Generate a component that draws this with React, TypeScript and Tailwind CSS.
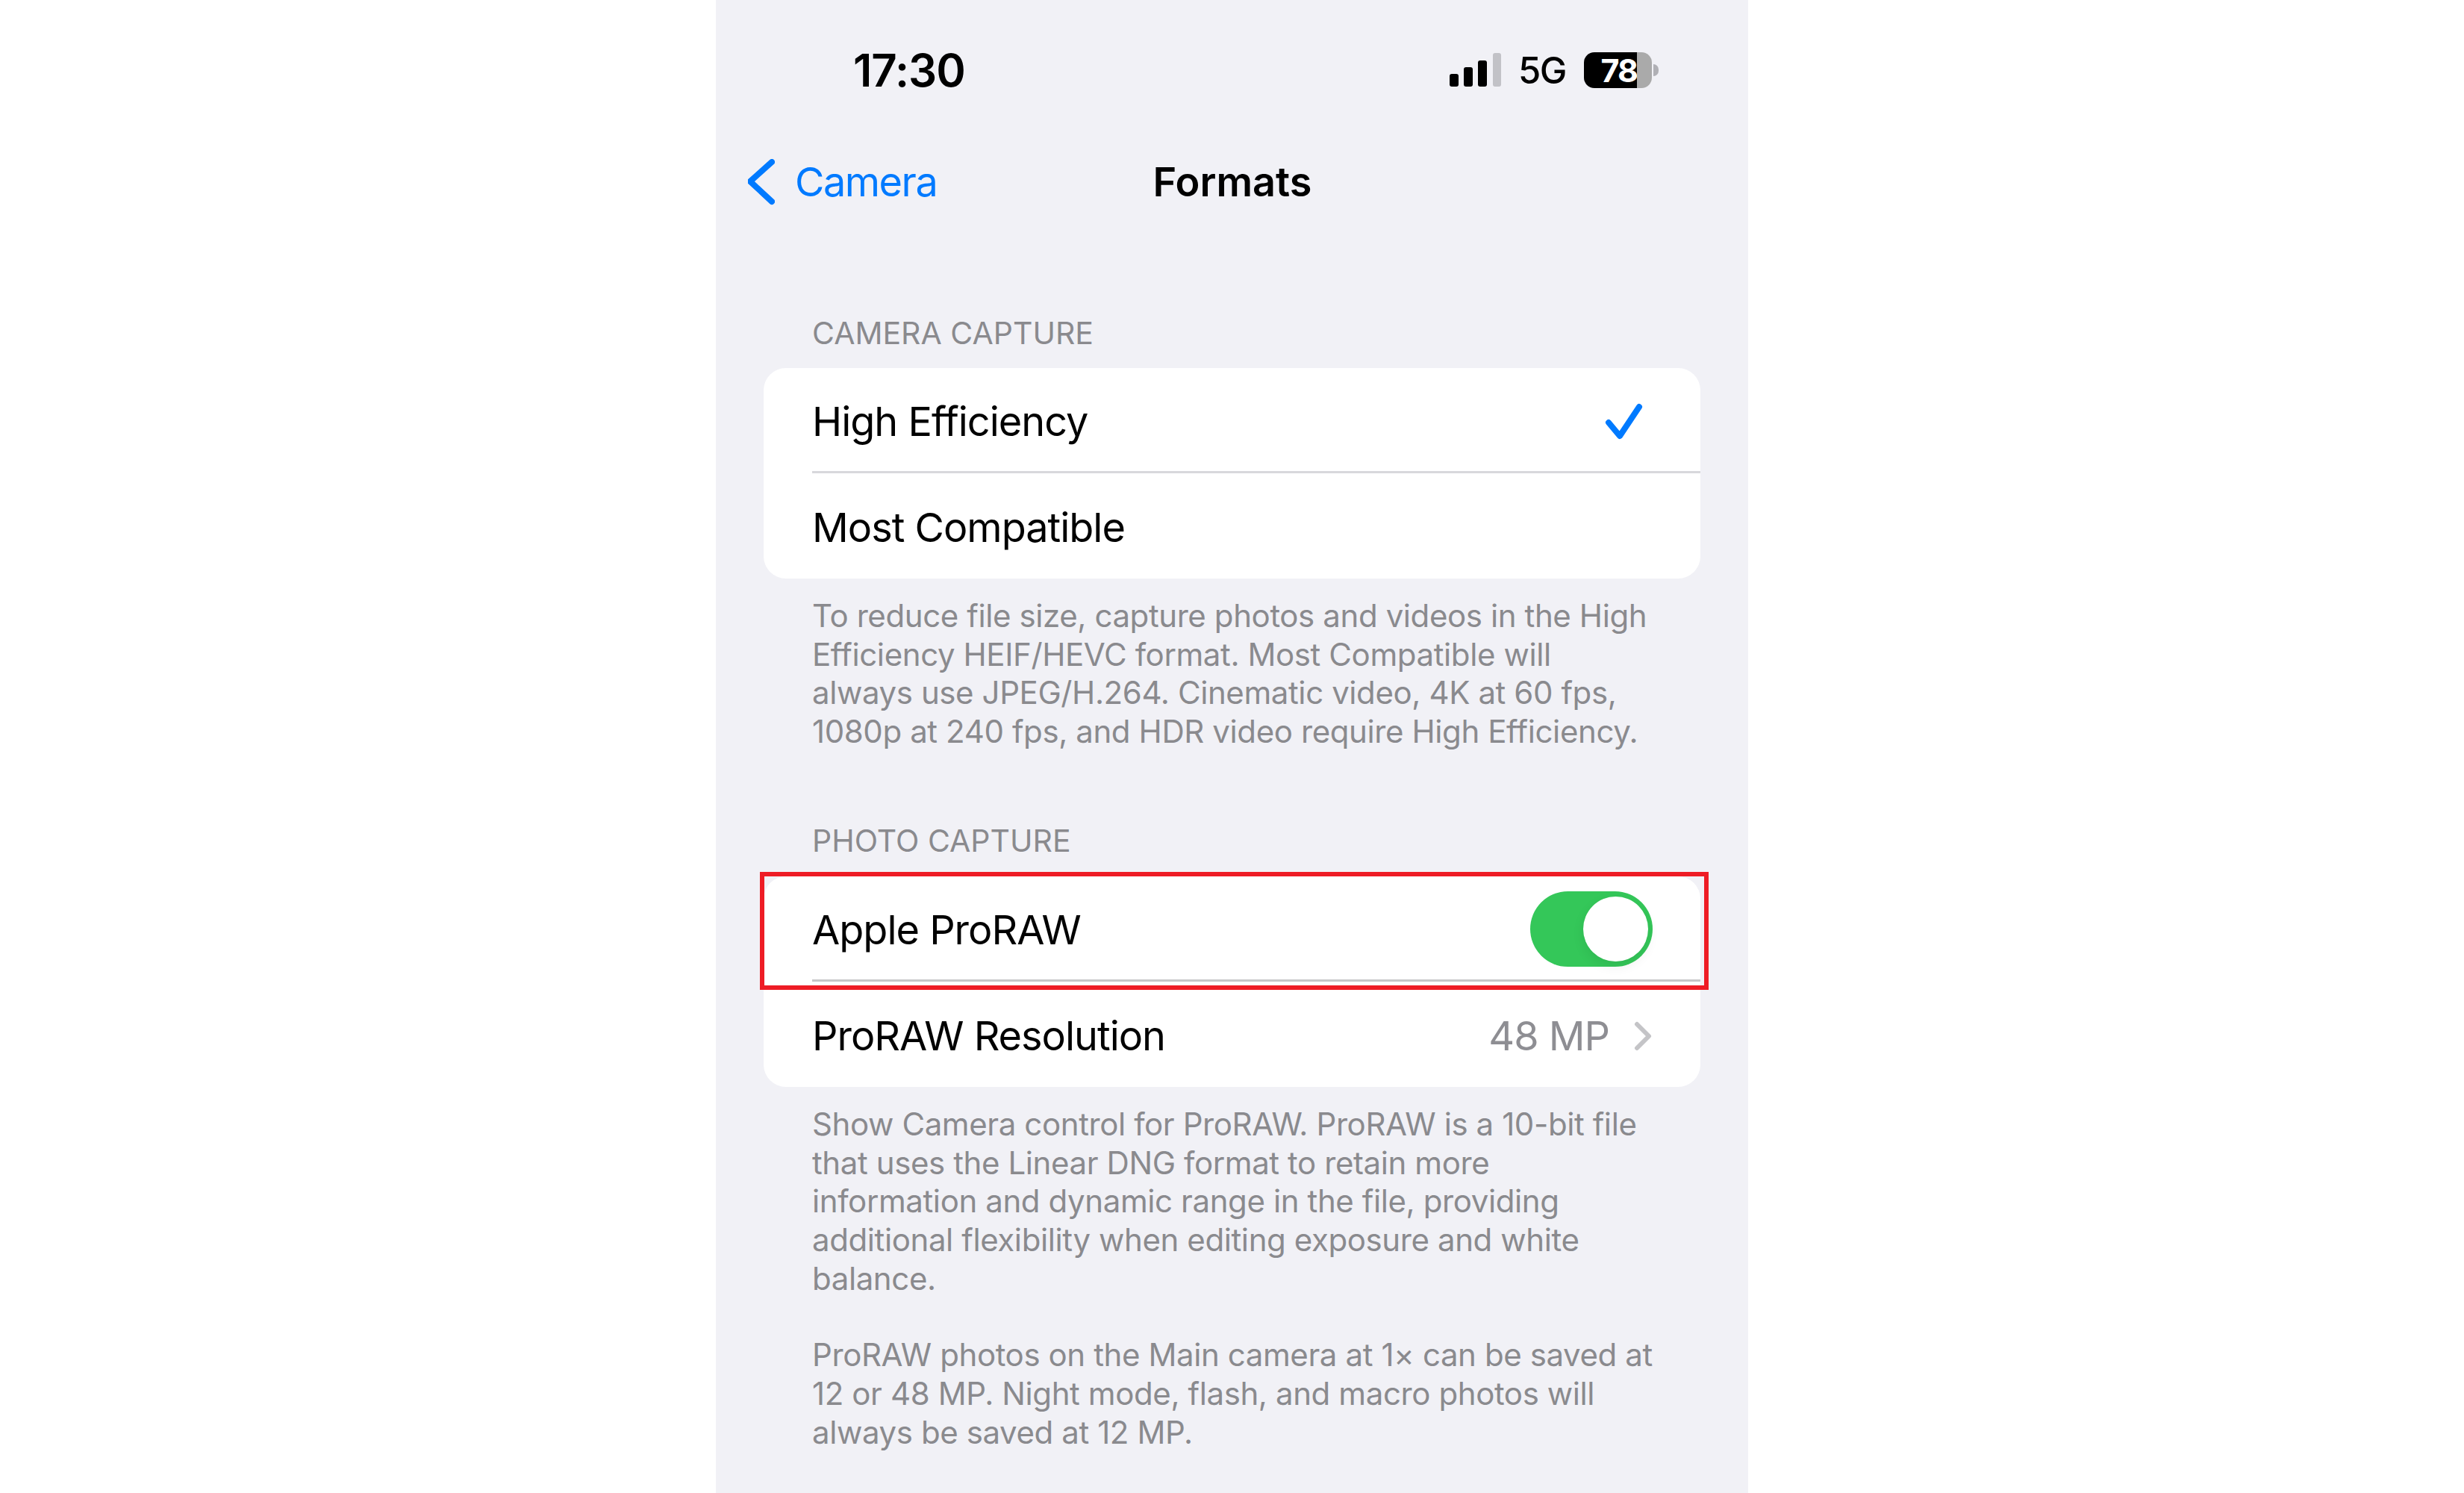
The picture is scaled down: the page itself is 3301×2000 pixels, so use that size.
const sans = "font-['Inter','Liberation_Sans',sans-serif]"

function StatusBar() {
  return (
    <div className="h-[188px] flex items-center justify-between pl-[184px] pr-[120px]">
      <span className="text-[60px] leading-none font-semibold text-black tracking-[-1px]">17:30</span>
      <div className="flex items-center">
        <svg width="70" height="46" viewBox="0 0 70 46" className="mr-[22px]">
          <rect x="0" y="28" width="12" height="17" rx="3" fill="#000" />
          <rect x="19" y="19" width="12" height="26" rx="3" fill="#000" />
          <rect x="38" y="10" width="12" height="35" rx="3" fill="#000" />
          <rect x="58" y="0" width="11" height="45" rx="3" fill="#c2c2c7" />
        </svg>
        <span className="text-[49px] leading-none font-medium tracking-[-1.5px] text-black mr-[24px]">5G</span>
        <div className="flex h-[48px] w-[91px]">
          <div className="h-full w-[71px] rounded-l-[14px] bg-black flex items-center justify-end">
            <span className="text-[43px] leading-none font-bold tracking-[-2px] text-white">78</span>
          </div>
          <div className="h-full flex-1 rounded-r-[14px] bg-[#aaaaaa]" />
        </div>
        <div className="ml-[2px] h-[16px] w-[7px] rounded-r-full bg-[#b0b0b5]" />
      </div>
    </div>
  )
}

function NavBar() {
  return (
    <div className="relative h-[112px] flex items-center justify-center">
      <div className="absolute left-[43px] top-0 h-full flex items-center">
        <svg width="36" height="62" viewBox="0 0 36 62" fill="none">
          <path d="M32 4 L3 30 L32 57" stroke="#007aff" strokeWidth="8" strokeLinecap="round" strokeLinejoin="round" />
        </svg>
        <span className="ml-[27px] text-[54px] leading-none tracking-[-1.5px] text-[#007aff]">Camera</span>
      </div>
      <span className="pl-[1px] text-[54px] leading-none font-semibold text-black">Formats</span>
    </div>
  )
}

function SectionLabel({ children }: { children: string }) {
  return <div className="pl-[129px] text-[41px] leading-[50px] text-[#8a8a8e]">{children}</div>
}

function Footnote({ lines }: { lines: string[] }) {
  return (
    <div className="pl-[129px] text-[42px] leading-[51.7px] tracking-[-0.4px] text-[#8a8a8e] whitespace-nowrap">
      {lines.map((l) => (
        <div key={l}>{l}</div>
      ))}
    </div>
  )
}

function Toggle() {
  return (
    <div className="mt-[3px] h-[101px] w-[164px] rounded-full bg-[#34c759] flex items-center justify-end pr-[6px]">
      <div className="h-[87px] w-[87px] rounded-full bg-white shadow-[0_6px_16px_rgba(0,0,0,0.08)]" />
    </div>
  )
}

export default function App() {
  return (
    <div className={`min-h-[2000px] w-full bg-white flex justify-center ${sans}`}>
      <div className="relative h-[2000px] w-[1383px] overflow-hidden bg-[#f1f1f6]">
        <StatusBar />
        <NavBar />

        <div className="mt-[121px]">
          <SectionLabel>CAMERA CAPTURE</SectionLabel>
        </div>
        <div className="mx-[64px] mt-[22px] h-[282px] rounded-[30px] bg-white text-[54px] leading-none tracking-[-1px] text-black">
          <div className="h-[141px] ml-[65px] pt-[6px] border-b-[3px] border-[#d8d8dc] flex items-center justify-between pr-[76px]">
            <span>High Efficiency</span>
            <svg width="52" height="50" viewBox="0 0 52 50" fill="none">
              <path d="M5 26 L20 44 L46 5" stroke="#007aff" strokeWidth="8" strokeLinecap="round" strokeLinejoin="round" />
            </svg>
          </div>
          <div className="h-[141px] pl-[65px] pt-[5px] flex items-center">Most Compatible</div>
        </div>

        <div className="mt-[24px]">
          <Footnote
            lines={[
              'To reduce file size, capture photos and videos in the High',
              'Efficiency HEIF/HEVC format. Most Compatible will',
              'always use JPEG/H.264. Cinematic video, 4K at 60 fps,',
              '1080p at 240 fps, and HDR video require High Efficiency.',
            ]}
          />
        </div>

        <div className="mt-[95px]">
          <SectionLabel>PHOTO CAPTURE</SectionLabel>
        </div>
        <div className="relative mx-[64px] mt-[23px] h-[282px] rounded-[30px] bg-white text-[54px] leading-none tracking-[-1px] text-black">
          <div className="h-[141px] ml-[65px] border-b-[3px] border-[#c6c6c8] flex items-center justify-between pr-[64px]">
            <span className="pt-[6px]">Apple ProRAW</span>
            <Toggle />
          </div>
          <div className="h-[141px] pl-[65px] pr-[64px] pt-[5px] flex items-center justify-between">
            <span>ProRAW Resolution</span>
            <div className="flex items-center">
              <span className="text-[#8e8e93]">48 MP</span>
              <svg width="26" height="40" viewBox="0 0 26 40" fill="none" className="ml-[32px]">
                <path d="M5 4 L21 20 L5 36" stroke="#c4c4c7" strokeWidth="6" strokeLinecap="round" strokeLinejoin="round" />
              </svg>
            </div>
          </div>
          {/* annotation box */}
          <div className="absolute -left-[5px] -right-[11px] -top-[6px] h-[158px] border-[6px] border-[#ee1c25]" />
        </div>

        <div className="mt-[24px]">
          <Footnote
            lines={[
              'Show Camera control for ProRAW. ProRAW is a 10-bit file',
              'that uses the Linear DNG format to retain more',
              'information and dynamic range in the file, providing',
              'additional flexibility when editing exposure and white',
              'balance.',
            ]}
          />
        </div>
        <div className="mt-[51px]">
          <Footnote
            lines={[
              'ProRAW photos on the Main camera at 1× can be saved at',
              '12 or 48 MP. Night mode, flash, and macro photos will',
              'always be saved at 12 MP.',
            ]}
          />
        </div>
      </div>
    </div>
  )
}
